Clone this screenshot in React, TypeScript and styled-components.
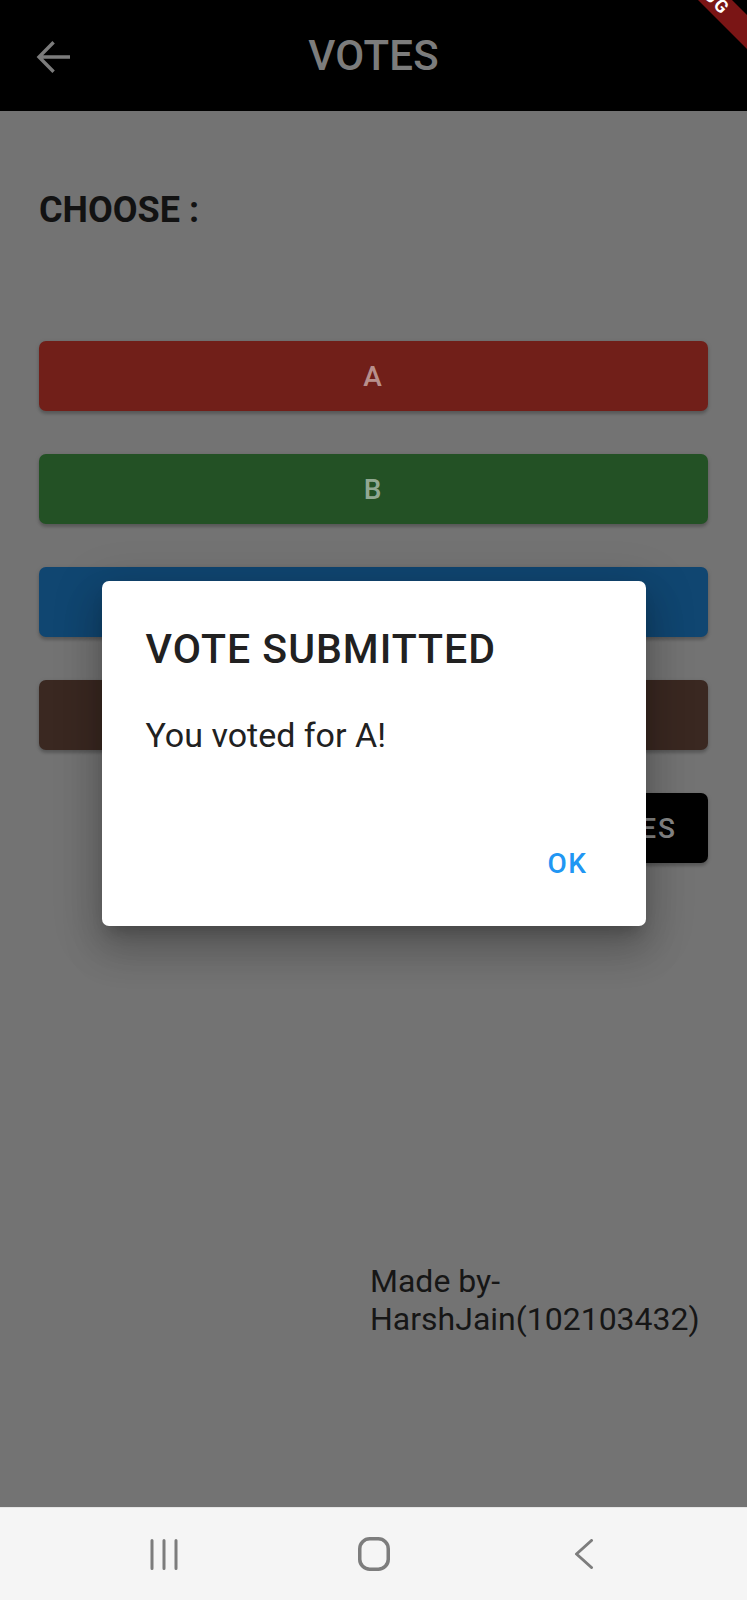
import React from "react";
import styled, { createGlobalStyle } from "styled-components";

const GlobalStyle = createGlobalStyle`
  html, body {
    margin: 0;
    padding: 0;
    background: #f5f5f5;
  }
  body {
    font-family: Roboto, "Liberation Sans", Arial, sans-serif;
  }
  * {
    box-sizing: border-box;
  }
`;

const Screen = styled.div`
  position: relative;
  width: 747px;
  height: 1600px;
  overflow: hidden;
  display: flex;
  flex-direction: column;
  font-family: Roboto, "Liberation Sans", Arial, sans-serif;
`;

const Content = styled.div`
  position: relative;
  flex: 1;
  display: flex;
  flex-direction: column;
`;

const AppBar = styled.header`
  height: 111px;
  flex-shrink: 0;
  background: #000;
  display: grid;
  grid-template-columns: 1fr auto 1fr;
  align-items: center;
`;

const BackSlot = styled.div`
  display: flex;
  align-items: center;
  padding-left: 30px;
  margin-top: 3px;
`;

const AppTitle = styled.h1`
  margin: 0;
  font-size: 42px;
  font-weight: 500;
  line-height: 48px;
  color: #7c7c7c;
  letter-spacing: 0.2px;
`;

const Body = styled.main`
  flex: 1;
  background: #737373;
  padding: 78px 39px 0;
  display: flex;
  flex-direction: column;
`;

const Heading = styled.h2`
  margin: 0;
  font-size: 36px;
  font-weight: 700;
  line-height: 42px;
  color: #121212;
`;

const ChoiceList = styled.div`
  margin-top: 110px;
  display: flex;
  flex-direction: column;
  gap: 43px;
`;

const ChoiceButton = styled.button<{ $bg: string }>`
  height: 70px;
  width: 100%;
  padding: 0;
  border: none;
  border-radius: 7px;
  background: ${(p) => p.$bg};
  color: rgba(255, 255, 255, 0.52);
  font-family: Roboto, "Liberation Sans", Arial, sans-serif;
  font-size: 28px;
  font-weight: 500;
  line-height: 33px;
  letter-spacing: 2px;
  box-shadow: 0 3px 3px rgba(0, 0, 0, 0.18), 0 1px 5px rgba(0, 0, 0, 0.1);
`;

const ResultsButton = styled(ChoiceButton)`
  align-self: flex-end;
  width: auto;
  padding: 0 31px;
  color: rgba(255, 255, 255, 0.55);
`;

const Credit = styled.p`
  margin: 400px 0 0 331px;
  font-size: 32px;
  font-weight: 400;
  line-height: 37.5px;
  color: #161616;
`;

const Scrim = styled.div`
  position: absolute;
  inset: 0;
  display: flex;
  align-items: center;
  justify-content: center;
`;

const Dialog = styled.div`
  width: 544px;
  background: #fff;
  border-radius: 7px;
  display: flex;
  flex-direction: column;
  box-shadow: 0 24px 38px 3px rgba(0, 0, 0, 0.16), 0 9px 46px 8px rgba(0, 0, 0, 0.13),
    0 11px 15px -7px rgba(0, 0, 0, 0.22);
`;

const DialogTitle = styled.h2`
  margin: 0;
  padding: 44px 44px 0;
  font-size: 41px;
  font-weight: 500;
  line-height: 48px;
  letter-spacing: 1px;
  color: #212121;
`;

const DialogText = styled.p`
  margin: 0;
  padding: 42px 44px 49px;
  font-size: 34px;
  font-weight: 400;
  line-height: 40px;
  color: #212121;
`;

const DialogActions = styled.div`
  display: flex;
  justify-content: flex-end;
  padding: 15px 19px 19px;
`;

const TextButton = styled.button`
  min-width: 118px;
  height: 88px;
  padding: 0 15px;
  border: none;
  background: transparent;
  color: #2196f3;
  font-family: Roboto, "Liberation Sans", Arial, sans-serif;
  font-size: 28px;
  font-weight: 500;
  line-height: 33px;
  letter-spacing: 1.5px;
`;

const DebugRibbon = styled.div`
  position: absolute;
  left: 593px;
  top: -24px;
  width: 220px;
  height: 24px;
  background: #7a1515;
  transform: rotate(45deg);
  display: flex;
  align-items: center;
  justify-content: center;
  color: #fff;
  font-size: 18px;
  font-weight: 700;
  letter-spacing: 2px;
  line-height: 24px;
`;

const NavBar = styled.nav`
  height: 93px;
  flex-shrink: 0;
  background: #f5f5f5;
  border-top: 1px solid #e6e6e6;
  display: grid;
  grid-template-columns: repeat(3, 210px);
  justify-content: center;
  align-items: center;
  color: #7d7d7d;
`;

const NavSlot = styled.div`
  display: flex;
  justify-content: center;
  align-items: center;
`;

const ArrowBack = () => (
  <svg width="48" height="48" viewBox="0 0 24 24" fill="none">
    <path
      d="M20 12H4.6M11.8 4.6L4.5 12l7.3 7.4"
      stroke="#7c7c7c"
      strokeWidth="1.7"
      strokeLinecap="butt"
      strokeLinejoin="miter"
    />
  </svg>
);

const RecentsIcon = () => (
  <svg width="30" height="31" viewBox="0 0 30 31" fill="none">
    <path d="M3 1.5v28M15 1.5v28M27 1.5v28" stroke="currentColor" strokeWidth="3" strokeLinecap="round" />
  </svg>
);

const HomeIcon = () => (
  <svg width="32" height="34" viewBox="0 0 32 34" fill="none">
    <rect x="1.75" y="1.75" width="28.5" height="30.5" rx="10" stroke="currentColor" strokeWidth="3.5" />
  </svg>
);

const NavBackIcon = () => (
  <svg width="20" height="30" viewBox="0 0 20 30" fill="none">
    <polyline
      points="17.5,1.5 2.5,15 17.5,28.5"
      stroke="currentColor"
      strokeWidth="3"
      strokeLinecap="round"
      strokeLinejoin="round"
    />
  </svg>
);

const choices = [
  { label: "A", color: "#711f19" },
  { label: "B", color: "#235125" },
  { label: "C", color: "#104671" },
  { label: "D", color: "#3a2821" },
];

export default function App() {
  return (
    <>
      <GlobalStyle />
      <Screen>
        <Content>
          <AppBar>
            <BackSlot>
              <ArrowBack />
            </BackSlot>
            <AppTitle>VOTES</AppTitle>
            <div />
          </AppBar>
          <Body>
            <Heading>CHOOSE :</Heading>
            <ChoiceList>
              {choices.map((c) => (
                <ChoiceButton key={c.label} $bg={c.color}>
                  {c.label}
                </ChoiceButton>
              ))}
              <ResultsButton $bg="#000">SHOW VOTES</ResultsButton>
            </ChoiceList>
            <Credit>
              Made by-
              <br />
              HarshJain(102103432)
            </Credit>
          </Body>
          <Scrim>
            <Dialog>
              <DialogTitle>VOTE SUBMITTED</DialogTitle>
              <DialogText>You voted for A!</DialogText>
              <DialogActions>
                <TextButton>OK</TextButton>
              </DialogActions>
            </Dialog>
          </Scrim>
        </Content>
        <NavBar>
          <NavSlot>
            <RecentsIcon />
          </NavSlot>
          <NavSlot>
            <HomeIcon />
          </NavSlot>
          <NavSlot>
            <NavBackIcon />
          </NavSlot>
        </NavBar>
        <DebugRibbon>DEBUG</DebugRibbon>
      </Screen>
    </>
  );
}
